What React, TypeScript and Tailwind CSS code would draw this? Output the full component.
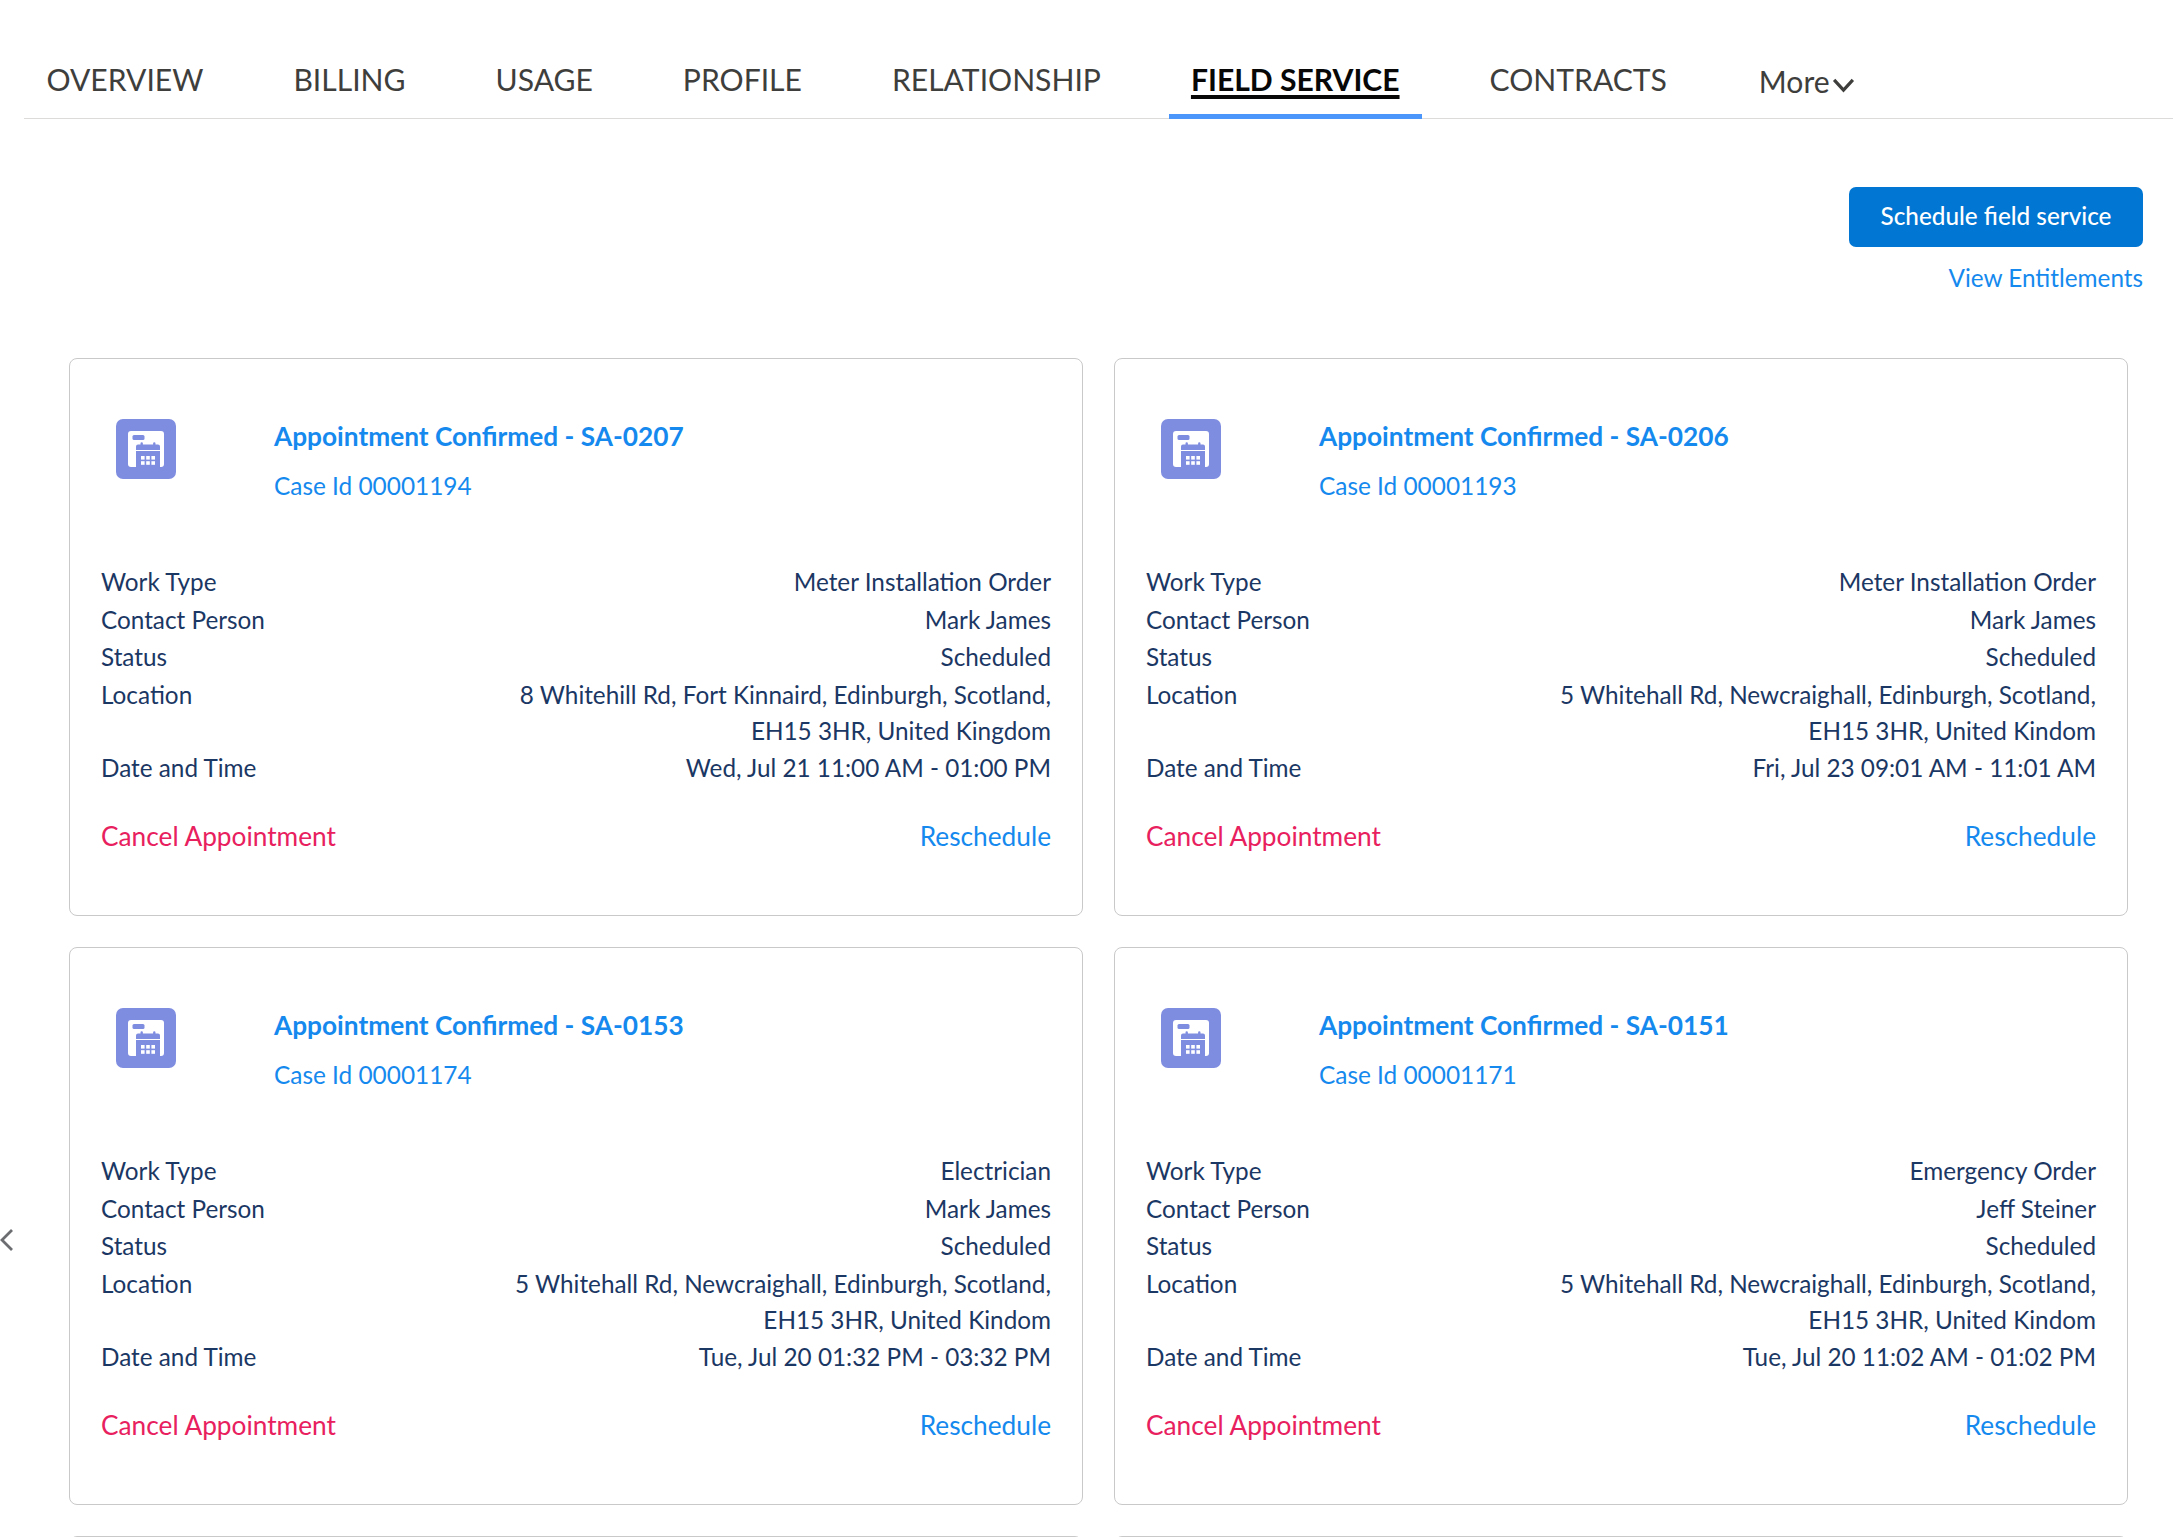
import React from "react";

const tabs = ["OVERVIEW", "BILLING", "USAGE", "PROFILE", "RELATIONSHIP", "FIELD SERVICE", "CONTRACTS"];

type Card = {
  id: string;
  caseId: string;
  workType: string;
  person: string;
  loc: string;
  date: string;
};

const cards: Card[] = [
  { id: "SA-0207", caseId: "00001194", workType: "Meter Installation Order", person: "Mark James", loc: "8 Whitehill Rd, Fort Kinnaird, Edinburgh, Scotland, EH15 3HR, United Kingdom", date: "Wed, Jul 21 11:00 AM - 01:00 PM" },
  { id: "SA-0206", caseId: "00001193", workType: "Meter Installation Order", person: "Mark James", loc: "5 Whitehall Rd, Newcraighall, Edinburgh, Scotland, EH15 3HR, United Kindom", date: "Fri, Jul 23 09:01 AM - 11:01 AM" },
  { id: "SA-0153", caseId: "00001174", workType: "Electrician", person: "Mark James", loc: "5 Whitehall Rd, Newcraighall, Edinburgh, Scotland, EH15 3HR, United Kindom", date: "Tue, Jul 20 01:32 PM - 03:32 PM" },
  { id: "SA-0151", caseId: "00001171", workType: "Emergency Order", person: "Jeff Steiner", loc: "5 Whitehall Rd, Newcraighall, Edinburgh, Scotland, EH15 3HR, United Kindom", date: "Tue, Jul 20 11:02 AM - 01:02 PM" },
];

function CalIcon() {
  return (
    <svg viewBox="0 0 60 60" className="w-[60px] h-[60px] shrink-0">
      <rect width="60" height="60" rx="7" fill="#7f8de1" />
      <path d="M15 12h30a3 3 0 0 1 3 3v30a3 3 0 0 1-3 3H15a3 3 0 0 1-3-3V15a3 3 0 0 1 3-3z" fill="#fff" />
      <rect x="16.5" y="16" width="12" height="5" rx="1.5" fill="#7f8de1" />
      <path d="M20 31v-3.5a2 2 0 0 1 2-2h2.5v-1a1.2 1.2 0 0 1 2.4 0v1h10.2v-1a1.2 1.2 0 0 1 2.4 0v1H42a2 2 0 0 1 2 2V31z" fill="#7f8de1" />
      <path d="M20 32h24v17H20z" fill="#7f8de1" />
      <g fill="#fff">
        <rect x="25" y="37" width="3.6" height="3.6" />
        <rect x="30.2" y="37" width="3.6" height="3.6" />
        <rect x="35.4" y="37" width="3.6" height="3.6" />
        <rect x="25" y="42.2" width="3.6" height="3.6" />
        <rect x="30.2" y="42.2" width="3.6" height="3.6" />
        <rect x="35.4" y="42.2" width="3.6" height="3.6" />
      </g>
    </svg>
  );
}

function Row({ label, value, wide }: { label: string; value: string; wide?: boolean }) {
  return (
    <div className="flex justify-between mb-[1.6px]">
      <span>{label}</span>
      <span className={wide ? "text-right w-[570px]" : "text-right"}>{value}</span>
    </div>
  );
}

function AppointmentCard({ c }: { c: Card }) {
  return (
    <div className="h-[558px] rounded-[8px] border border-[#c9c9c9] bg-white pl-[31px] pr-[31px] pt-[60px]">
      <div className="flex h-[145px]">
        <div className="w-[173px] pl-[15px]">
          <CalIcon />
        </div>
        <div className="-mt-[1px] text-[#1589ee]">
          <div className="text-[26.25px] leading-[36px] font-bold">Appointment Confirmed - {c.id}</div>
          <div className="mt-[14px] text-[24.4px] leading-[36px]">Case Id {c.caseId}</div>
        </div>
      </div>
      <div className="text-[24.3px] leading-[36px] text-[#1b3764]">
        <Row label="Work Type" value={c.workType} />
        <Row label="Contact Person" value={c.person} />
        <Row label="Status" value="Scheduled" />
        <Row label="Location" value={c.loc} wide />
        <Row label="Date and Time" value={c.date} />
      </div>
      <div className="mt-[30px] flex justify-between text-[26.25px] leading-[40px]">
        <span className="text-[#e8205e]">Cancel Appointment</span>
        <span className="text-[#1589ee]">Reschedule</span>
      </div>
    </div>
  );
}

export default function App() {
  return (
    <div className="relative h-[1537px] overflow-hidden bg-white font-['Lato',sans-serif]">
      <div className="ml-[24px] mr-[10px] flex h-[119px] items-end gap-[90px] border-b border-[#dddbda] pl-[22.5px] text-[30.1px] leading-[45px] text-[#3e3e3c]">
        {tabs.map((t) =>
          t === "FIELD SERVICE" ? (
            <div key={t} className="-mx-[22px] -mb-px flex h-[62px] items-start border-b-[5px] border-[#4a96fb] px-[22px] font-bold text-[#080707] underline decoration-[3.5px] underline-offset-[4px]">
              {t}
            </div>
          ) : (
            <div key={t} className="flex h-[61px] items-start">{t}</div>
          )
        )}
        <div className="flex h-[59px] items-start pl-[2px]">
          More
          <svg viewBox="0 0 24 16" className="ml-[2px] mt-[19px] h-[15px] w-[23px]" fill="none" stroke="#3e3e3c" strokeWidth="3.4">
            <path d="M2 2l10 11L22 2" />
          </svg>
        </div>
      </div>

      <div className="mr-[40px] mt-[68px] flex flex-col items-end">
        <button className="h-[60px] w-[294px] rounded-[7px] bg-[#0176d3] pb-[2px] text-[24.3px] font-medium text-white">Schedule field service</button>
        <a className="mt-[13px] text-[24.3px] leading-[36px] text-[#1589ee]">View Entitlements</a>
      </div>

      <div className="ml-[69px] mr-[55px] mt-[62px] grid grid-cols-2 gap-x-[31px] gap-y-[31px]">
        {cards.map((c) => (
          <AppointmentCard key={c.id} c={c} />
        ))}
        <div className="h-[558px] rounded-[8px] border border-[#c9c9c9]" />
        <div className="h-[558px] rounded-[8px] border border-[#c9c9c9]" />
      </div>

      <svg viewBox="0 0 14 24" className="absolute left-0 top-[1228px] h-[24px] w-[14px]" fill="none" stroke="#6b6d70" strokeWidth="2.8">
        <path d="M12 2L2 12l10 10" />
      </svg>
    </div>
  );
}
